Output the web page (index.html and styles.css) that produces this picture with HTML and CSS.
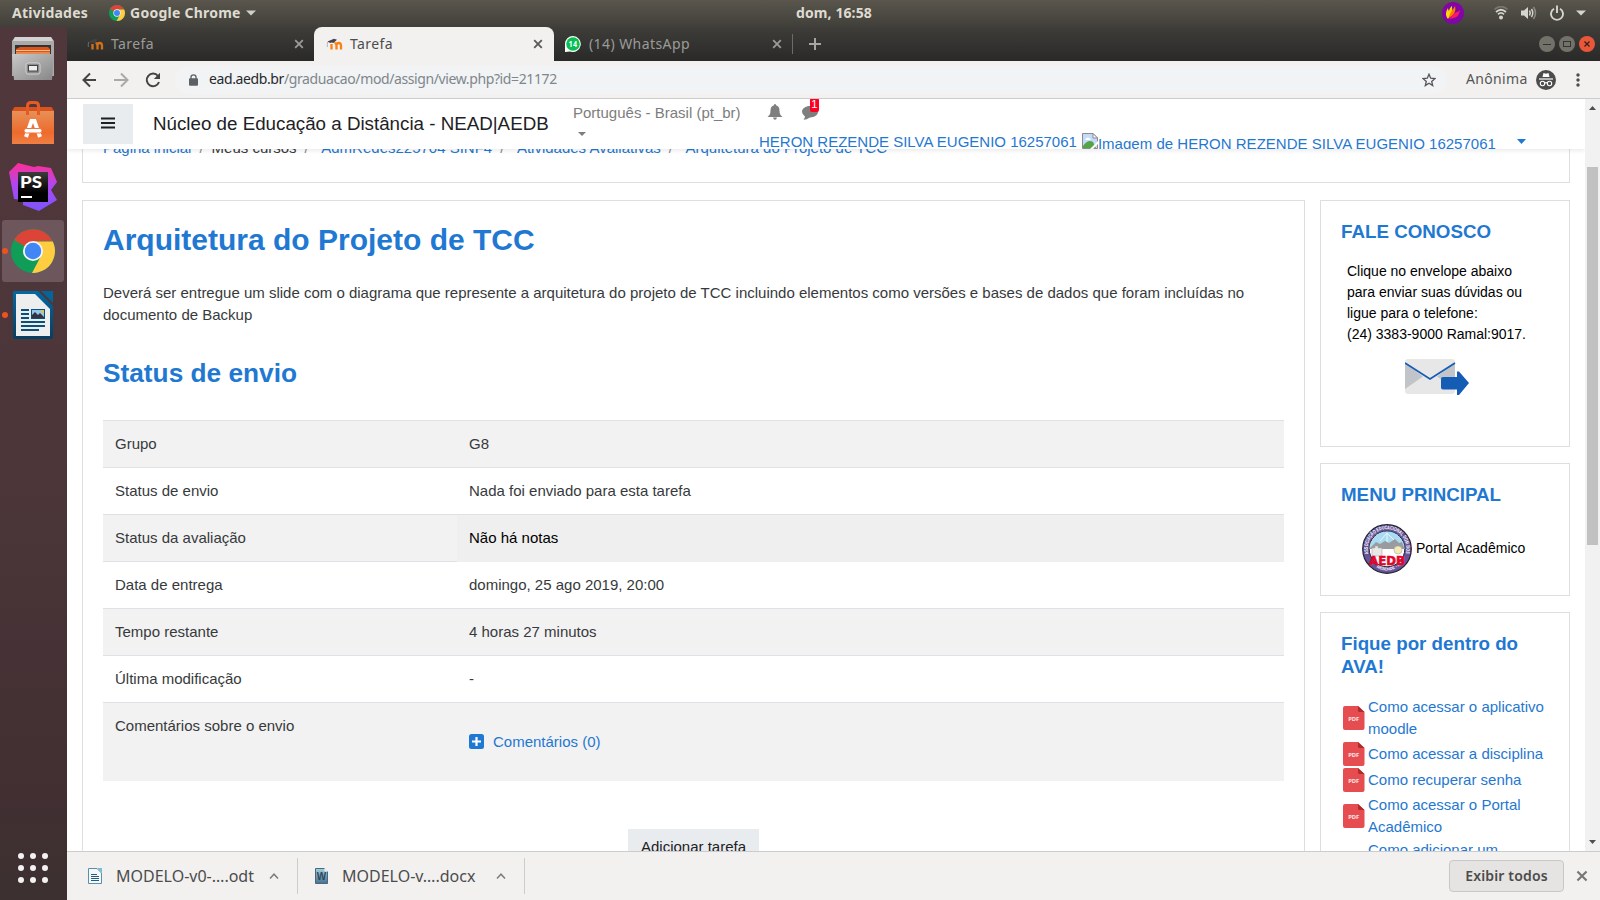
FILE: index.html
```html
<!DOCTYPE html>
<html lang="pt-br">
<head>
<meta charset="utf-8">
<title>Tarefa</title>
<link rel="stylesheet" href="styles.css">
</head>
<body>
<svg width="0" height="0" class="defs">
  <defs>
    <linearGradient id="steel" x1="0" y1="0" x2="1" y2="1"><stop offset="0" stop-color="#c9c9c9"/><stop offset="1" stop-color="#868686"/></linearGradient>
    <linearGradient id="bag" x1="0" y1="0" x2="0" y2="1"><stop offset="0" stop-color="#e79058"/><stop offset=".65" stop-color="#ee6a2c"/><stop offset="1" stop-color="#f08044"/></linearGradient>
    <linearGradient id="pink" x1="0" y1="0" x2="0" y2="1"><stop offset="0" stop-color="#ff2e93"/><stop offset=".45" stop-color="#b146f0"/><stop offset="1" stop-color="#7a55fb"/></linearGradient>
    <linearGradient id="blk" x1="0" y1="0" x2="0" y2="1"><stop offset="0" stop-color="#3c3c3c"/><stop offset=".7" stop-color="#000"/></linearGradient>
    <linearGradient id="blue" x1="0" y1="0" x2="0" y2="1"><stop offset="0" stop-color="#0369a3"/><stop offset="1" stop-color="#083d5f"/></linearGradient>
    <linearGradient id="word" x1="0" y1="0" x2="0" y2="1"><stop offset="0" stop-color="#a3cfdd"/><stop offset="1" stop-color="#48708f"/></linearGradient>
    <symbol id="chrome" viewBox="0 0 44 44">
      <circle cx="22" cy="22" r="22" fill="#0f9d58"/>
      <path d="M22 22 3 11A22 22 0 0 1 41.5 12L22 12.500Z" fill="#db4437"/>
      <path d="M22 12.500H41.800A22 22 0 0 1 21 44L30 27Z" fill="#ffcd40"/>
      <circle cx="22" cy="22" r="10" fill="#f4f4f4"/><circle cx="22" cy="22" r="8.200" fill="#4285f4"/>
    </symbol>
    <symbol id="moodle" viewBox="0 0 16 12">
      <path d="M5 11.500V6M10 11.500V7.500Q10 5.200 8 5.200M10 7.500Q10 5 12.200 5T14.500 7.500V11.500" fill="none" stroke="#f98012" stroke-width="2.300"/>
      <path d="M1 3.500 7.500.800l3 1-3.500 3.200Q5 4 3.500 5Z" fill="#454545"/><path d="M1.200 4Q.5 6 .8 9" fill="none" stroke="#999" stroke-width=".7"/>
    </symbol>
    <symbol id="x" viewBox="0 0 10 10"><path d="M1.200 1.200 8.800 8.800M8.800 1.200 1.200 8.800" stroke="currentColor" stroke-width="1.800"/></symbol>
    <symbol id="pdf" viewBox="0 0 22 24">
      <path d="M2 0H15L21.500 6V22a2 2 0 0 1-2 2H2a2 2 0 0 1-2-2V2a2 2 0 0 1 2-2Z" fill="#e64d50"/><path d="M15 0 21.500 6H16.500A1.500 1.500 0 0 1 15 4.500Z" fill="#b32a2d"/>
      <text x="5.200" y="15" font-family="Noto Sans,sans-serif" font-size="5.800" font-weight="700" fill="#fbe6e6" textLength="11">PDF</text>
    </symbol>
  </defs>
</svg>
<div class="desktop">
  <header class="panel">
    <span class="activities">Atividades</span>
    <svg class="panel-logo" width="16" height="16"><use href="#chrome"/></svg>
    <span class="appname">Google Chrome</span>
    <svg class="panel-caret" width="10" height="6"><path d="M0 .5H10L5 5.500Z" fill="#d0cfc9"/></svg>
    <span class="clock">dom, 16:58</span>
    <div class="tray">
      <svg width="22" height="22" viewBox="0 0 22 22"><circle cx="11" cy="11" r="11" fill="#8106a5"/><path d="M6 17C2 12 5 8 6 6c0 2 1 3 1 3 1-4 3-5 3-5 0 4 1 5-1 8Z" fill="#ffd60a"/><path d="M7 16C8 9 12 7 13 4c1 4 0 6-2 9Z" fill="#ff7a00"/><path d="M7 17c3-2 4-6 8-7 0 0 2-1 3-2-1 6-3 8-11 9Z" fill="#ff1767"/></svg>
      <svg class="wifi" width="14" height="14" viewBox="0 0 14 14" fill="none" stroke-width="1.700"><path d="M.500 3.500Q7-2.500 13.500 3.500" stroke="#77766e"/><path d="M2 6Q7 1.500 12 6M4 8.300Q7 5.500 10 8.300" stroke="#d5d4cf"/><circle cx="7" cy="11.500" r="2" fill="#d5d4cf"/></svg>
      <svg class="vol" width="16" height="14" viewBox="0 0 16 14"><path d="M0 4.500H3L7 1V13L3 9.500H0Z" fill="#d5d4cf"/><path d="M8.500 4.500Q10 7 8.500 9.500M10.500 3Q13 7 10.500 11" fill="none" stroke="#d5d4cf" stroke-width="1.500"/><path d="M12.500 1Q16.500 7 12.500 13" fill="none" stroke="#8a8981" stroke-width="1.500"/></svg>
      <svg class="power" width="14" height="16" viewBox="0 0 14 16"><path d="M4 3.700A6 6 0 1 0 10 3.700M7 .5V8" fill="none" stroke="#d5d4cf" stroke-width="1.900"/></svg>
      <svg class="sys-caret" width="10" height="6"><path d="M0 .5H10L5 5.500Z" fill="#d5d4cf"/></svg>
    </div>
  </header>
  <div class="below">
    <nav class="dock">
      <svg width="67" height="873" viewBox="0 27 67 873">
        <rect x="2" y="220" width="62" height="62" rx="3" fill="#6d565c"/>
        <path d="M15 37H51L54 41V76H12V41Z" fill="#aaa"/><path d="M15 37H51L53 41H13Z" fill="#d3d3d3"/><path d="M15 45H51V55H15Z" fill="#333"/><path d="M16 49 20 47H48L50 49V55H16Z" fill="#d9551c"/><path d="M16 50.500H50M16 53H50" stroke="#f6bd86" stroke-width="1.200"/>
        <path d="M12 54H54L52 80H14Z" fill="url(#steel)"/><rect x="26" y="63" width="14" height="11" rx="2" fill="#8b8b8b" stroke="#d6d6d6"/><rect x="28.500" y="65.500" width="9" height="5.500" fill="#eee" stroke="#444"/>
        <path d="M14 107H52L54 111H12Z" fill="#b13e12"/><path d="M12 111H54V144H12Z" fill="url(#bag)"/><path d="M12 111 15 107H51L54 111Z" fill="#d9531e"/><path d="M27.500 115V106Q27.500 102.500 31 102.500H35Q38.500 102.500 38.500 106V115" fill="none" stroke="#e65b24" stroke-width="3"/>
        <path d="M26 137 31.500 121H34.500L40 137" fill="none" stroke="#fff" stroke-width="4"/><rect x="24" y="128.500" width="18" height="4.500" rx="2.200" fill="#fff" stroke="#ed763c"/>
        <path d="M9 172 18 163 34 167 38 166 51 168 57 182 51 190 57 200 39 211 23 205 23 200 14 199Z" fill="url(#pink)"/><rect x="18" y="172" width="30" height="30" fill="url(#blk)"/><text x="20" y="188" font-family="Lato,sans-serif" font-size="17" font-weight="900" textLength="22" lengthAdjust="spacingAndGlyphs" fill="#fff">PS</text><path d="M21 197H32" stroke="#fff" stroke-width="2"/>
        <use href="#chrome" x="11" y="229" width="44" height="44"/>
        <path d="M13 293Q13 291 15 291H38L53 306V337Q53 339 51 339H15Q13 339 13 337Z" fill="url(#blue)"/><path d="M41 291H53V303Z" fill="#05649a"/><path d="M16 294H35L50 309V336H16Z" fill="#eee"/><path d="M21 310H29M21 314H29M21 318H29M21 322H45M21 326H45M21 330H39" stroke="#07517c" stroke-width="2"/><rect x="31.500" y="309.500" width="13" height="9" fill="#8fc9e8" stroke="#07517c"/><path d="M32 318V315L35 312 38 315 40 313 44 317V318Z" fill="#334"/><circle cx="42.500" cy="311.500" r="1.500" fill="#f2c037"/>
        <circle cx="5" cy="251" r="3" fill="#e95420"/><circle cx="5" cy="315" r="3" fill="#e95420"/>
        <g fill="#f3f1f1"><circle cx="21" cy="856" r="3"/><circle cx="33" cy="856" r="3"/><circle cx="45" cy="856" r="3"/><circle cx="21" cy="868" r="3"/><circle cx="33" cy="868" r="3"/><circle cx="45" cy="868" r="3"/><circle cx="21" cy="880" r="3"/><circle cx="33" cy="880" r="3"/><circle cx="45" cy="880" r="3"/></g>
      </svg>
    </nav>
    <div class="browser">
      <div class="tabs">
        <div class="tab tab-first"><svg class="dim" width="17" height="12"><use href="#moodle"/></svg><span>Tarefa</span><svg class="close" width="10" height="10"><use href="#x"/></svg></div>
        <div class="tab active"><svg width="17" height="12"><use href="#moodle"/></svg><span>Tarefa</span><svg class="close" width="10" height="10"><use href="#x"/></svg></div>
        <div class="tab tab-wa"><svg width="16" height="16" viewBox="0 0 16 16"><path d="M8 0A8 8 0 1 1 5 15.500L0 16V8A8 8 0 0 1 8 0Z" fill="#fff"/><circle cx="8" cy="8" r="6.800" fill="#07bf52"/><text x="3.500" y="10.700" font-family="Noto Sans,sans-serif" font-size="8" font-weight="700" textLength="9" lengthAdjust="spacingAndGlyphs" fill="#fff">14</text></svg><span class="wa-title">(14) WhatsApp</span><svg class="close" width="10" height="10"><use href="#x"/></svg></div>
        <svg class="plus" width="12" height="12"><path d="M6 0V12M0 6H12" stroke="#a5a5a1" stroke-width="2"/></svg>
        <div class="winbtns">
          <svg width="56" height="16" viewBox="0 0 56 16"><circle cx="8" cy="8" r="8" fill="#73726a"/><path d="M4 8.500H12" stroke="#33332f"/><circle cx="28" cy="8" r="8" fill="#73726a"/><rect x="24.500" y="5.500" width="7" height="5" fill="none" stroke="#33332f"/><circle cx="48" cy="8" r="8" fill="#e9573a"/><path d="M45.500 5.500 50.500 10.500M50.500 5.500 45.500 10.500" stroke="#3a2019" stroke-width="1.300"/></svg>
        </div>
      </div>
      <div class="toolbar">
        <svg class="nav-icons" width="80" height="16" viewBox="0 0 80 16" fill="none" stroke-width="2"><path d="M14 8H2M8 1.500 1.500 8 8 14.500" stroke="#444"/><path d="M32 8H45M39 1.500 45.500 8 39 14.500" stroke="#aaa9a8"/><path d="M76 4A6.300 6.300 0 1 0 77 10" stroke="#444"/><path d="M78 .8V7H71.800Z" fill="#444"/></svg>
        <div class="omnibox">
          <svg width="9" height="12" viewBox="0 0 9 12"><rect y="4.200" width="9" height="7.500" rx="1" fill="#5d6166"/><path d="M2 5V3Q2 .8 4.500.8T7 3V5" fill="none" stroke="#5d6166" stroke-width="1.300"/></svg>
          <span class="url"><b>ead.aedb.br</b>/graduacao/mod/assign/view.php?id=21172</span>
          <svg class="star" width="14" height="14" viewBox="0 0 14 14"><path d="M7 1.200 8.700 5.200 13 5.500 9.700 8.400 10.700 12.600 7 10.300 3.300 12.600 4.300 8.400 1 5.500 5.300 5.200Z" fill="none" stroke="#54565a" stroke-width="1.300"/></svg>
        </div>
        <span class="anon">Anônima</span>
        <svg class="incog" width="20" height="20" viewBox="0 0 20 20"><circle cx="10" cy="10" r="10" fill="#4c4c4c"/><path d="M6.500 7 7.500 3 10 3.800 12.500 3 13.500 7Z" fill="#fff"/><path d="M3 9H17" stroke="#fff" stroke-width="1.200"/><g fill="none" stroke="#fff" stroke-width="1.100"><circle cx="6.500" cy="13.500" r="2.200"/><circle cx="13.500" cy="13.500" r="2.200"/><path d="M8.700 13Q10 12.300 11.300 13"/></g></svg>
        <svg class="dots" width="4" height="14" fill="#4c4c4c"><circle cx="2" cy="2" r="1.700"/><circle cx="2" cy="7" r="1.700"/><circle cx="2" cy="12" r="1.700"/></svg>
      </div>
      <div class="viewport">
        <div class="page">
          <div class="navbar">
            <div class="burger"><svg width="14" height="12"><path d="M0 1.500H14M0 6H14M0 10.500H14" stroke="#1d2125" stroke-width="2"/></svg></div>
            <div class="brand">Núcleo de Educação a Distância - NEAD|AEDB</div>
            <div class="lang">Português - Brasil (pt_br)<svg width="8" height="4"><path d="M0 0H8L4 4Z" fill="#7d7d7d"/></svg></div>
            <div class="user">
              <div class="notices">
                <svg width="16" height="16" viewBox="0 0 16 16" fill="#7f7f7f"><path d="M8 0Q9 0 9 1.200Q12.500 2 12.500 6.500Q12.500 11 15.500 13H.5Q3.500 11 3.500 6.500Q3.500 2 7 1.200Q7 0 8 0ZM6 13.500H10Q9.500 15.800 8 15.800T6 13.500Z"/></svg>
                <span class="chat"><svg width="16" height="14" viewBox="0 0 16 14"><path d="M8 0C12.500 0 16 2.500 16 5.800S12.500 11.500 8 11.500Q4.500 13.800 1.500 13.800Q3 12 3 10.500Q0 8.500 0 5.800C0 2.500 3.500 0 8 0Z" fill="#7f7f7f"/></svg><i class="badge">1</i></span>
              </div>
              <div class="userline"><span>HERON REZENDE SILVA EUGENIO 16257061</span><span class="avatar"><svg width="16" height="16" viewBox="0 0 16 16"><path d="M.5.5H11L15.500 5V15.500H.5Z" fill="#c5dafb" stroke="#8b8b8b"/><path d="M11 .5V5H15.500Z" fill="#fff" stroke="#8b8b8b"/><path d="M1 15V13Q6 6 11 9L14 15Z" fill="#54a344"/><path d="M3.500 6Q5 3.500 7 5Q9 5 8.500 7H3.500Z" fill="#fff"/><path d="M16 8 8 16H11L16 11Z" fill="#fff"/></svg>Imagem de HERON REZENDE SILVA EUGENIO 16257061</span><svg class="user-caret" width="9" height="5"><path d="M0 0H9L4.500 5Z" fill="#1f78d1"/></svg></div>
            </div>
          </div>
          <div class="crumbs"><a>Página inicial</a><i>/</i><span>Meus cursos</span><i class="wide">/</i><a>AdmRedes225704 SINF4</a><i class="wide">/</i><a>Atividades Avaliativas</a><i class="wide">/</i><a>Arquitetura do Projeto de TCC</a></div>
          <div class="columns">
            <main class="card main">
              <h2>Arquitetura do Projeto de TCC</h2>
              <p>Deverá ser entregue um slide com o diagrama que represente a arquitetura do projeto de TCC incluindo elementos como versões e bases de dados que foram incluídas no documento de Backup</p>
              <h3>Status de envio</h3>
              <div class="table">
                <div class="row"><div>Grupo</div><div>G8</div></div>
                <div class="row"><div>Status de envio</div><div>Nada foi enviado para esta tarefa</div></div>
                <div class="row"><div>Status da avaliação</div><div class="nograde">Não há notas</div></div>
                <div class="row"><div>Data de entrega</div><div>domingo, 25 ago 2019, 20:00</div></div>
                <div class="row"><div>Tempo restante</div><div>4 horas 27 minutos</div></div>
                <div class="row"><div>Última modificação</div><div>-</div></div>
                <div class="row last"><div>Comentários sobre o envio</div><div class="comments"><svg width="15" height="15" viewBox="0 0 15 15"><rect width="15" height="15" rx="2.500" fill="#1f78d1"/><path d="M7.500 3V12M3 7.500H12" stroke="#fff" stroke-width="2.200"/></svg><a>Comentários (0)</a></div></div>
              </div>
              <div class="add">Adicionar tarefa</div>
            </main>
            <aside>
              <section class="card contact">
                <h5>FALE CONOSCO</h5>
                <p>Clique no envelope abaixo<br>para enviar suas dúvidas ou<br>ligue para o telefone:<br>(24) 3383-9000 Ramal:9017.</p>
                <svg width="64" height="36" viewBox="0 0 64 36"><rect width="50" height="35" rx="3" fill="#e7e7e7"/><path d="M0 4 18 17.500 0 30ZM50 4 32 17.500 50 30Z" fill="#c1c5c9"/><path d="M0 4 25 20 50 4" fill="none" stroke="#155cb5" stroke-width="1.700"/><path d="M38 18H52V12.500L54 12.500 64 24 54 36H52V30.500H38Q36 30.500 36 28.500V20Q36 18 38 18Z" fill="#155cb5"/></svg>
              </section>
              <section class="card menu">
                <h5>MENU PRINCIPAL</h5>
                <div class="portal"><svg width="50" height="50" viewBox="0 0 50 50"><defs><path id="arc" d="M6.500 30A19.300 19.300 0 1 1 43.500 30"/><path id="arc2" d="M9 39Q25 54 41 39"/></defs><circle cx="25" cy="25" r="24.300" fill="#65549a" stroke="#25222f" stroke-width="1.200"/><circle cx="25" cy="25" r="17.800" fill="#fff" stroke="#25222f"/><path d="M7.500 25A17.500 17.500 0 0 1 42.500 25Z" fill="#a9dbf2"/><path d="M25 9V20M25 9 18 17M25 9 33 17" stroke="#e8f7fd"/><path d="M8 24 14 18 18 20 23 17 27 19 33 15 37 19 40 18 42.500 25H8Z" fill="#9a9b9e"/><path d="M10 28V24H13V22H16V24H20V32H10Z" fill="#e8e8e8" stroke="#aaa" stroke-width=".6"/><circle cx="36" cy="26" r="4" fill="#f3ebb6" stroke="#aaa" stroke-width=".6"/><text font-family="Liberation Sans,sans-serif" font-size="5.200" font-weight="700" fill="#fff"><textPath href="#arc" textLength="76" lengthAdjust="spacingAndGlyphs">ASSOCIAÇÃO EDUCACIONAL DOM BOSCO</textPath></text><text font-family="Liberation Sans,sans-serif" font-size="4" font-weight="700" fill="#fff"><textPath href="#arc2" startOffset="7">RESENDE - RJ</textPath></text><text x="7" y="41" font-family="DejaVu Sans,sans-serif" font-size="12.500" font-weight="700" fill="#e2062c" stroke="#e2062c" stroke-width=".6" textLength="36" lengthAdjust="spacingAndGlyphs">AEDB</text></svg><span>Portal Acadêmico</span></div>
              </section>
              <section class="card tips">
                <h5>Fique por dentro do AVA!</h5>
                <div class="tip two"><svg width="22" height="24"><use href="#pdf"/></svg><a>Como acessar o aplicativo<br>moodle</a></div>
                <div class="tip"><svg width="22" height="24"><use href="#pdf"/></svg><a>Como acessar a disciplina</a></div>
                <div class="tip"><svg width="22" height="24"><use href="#pdf"/></svg><a>Como recuperar senha</a></div>
                <div class="tip two"><svg width="22" height="24"><use href="#pdf"/></svg><a>Como acessar o Portal<br>Acadêmico</a></div>
                <div class="tip two cut"><svg width="22" height="24"><use href="#pdf"/></svg><a>Como adicionar um</a></div>
              </section>
            </aside>
          </div>
        </div>
        <div class="scroll"><svg width="7" height="4"><path d="M0 4H7L3.500 0Z" fill="#4f4f4f"/></svg><div class="thumb"></div><svg class="down" width="7" height="4"><path d="M0 0H7L3.500 4Z" fill="#4f4f4f"/></svg></div>
      </div>
      <footer class="shelf">
        <div class="dl dl1"><svg width="14" height="16" viewBox="0 0 14 16"><path d="M.5.5H9L13.500 5V15.500H.5Z" fill="#f5f8fa" stroke="#5b90ad"/><path d="M9 0H14V5Z" fill="#7dbdd0"/><path d="M3 6.500H9M3 8.500H11M3 10.500H11M3 12.500H11" stroke="#245a7d"/></svg><span>MODELO-v0-….odt</span><svg class="up" width="10" height="6"><path d="M1 5.500 5 1.200 9 5.500" fill="none" stroke="#7d7d7d" stroke-width="1.500"/></svg></div>
        <div class="dl dl2"><svg width="13" height="16" viewBox="0 0 13 16"><path d="M.5.5H9.500L12.500 3.500V15.500H.5Z" fill="url(#word)" stroke="#48697d"/><path d="M9.500 0 13 3.500H9.500Z" fill="#f2f2f2"/><text x="1.800" y="11.800" font-family="Liberation Sans,sans-serif" font-size="10" font-weight="700" fill="#30495a">W</text></svg><span>MODELO-v….docx</span><svg class="up" width="10" height="6"><path d="M1 5.500 5 1.200 9 5.500" fill="none" stroke="#7d7d7d" stroke-width="1.500"/></svg></div>
        <div class="showall">Exibir todos</div>
        <svg class="shelf-x" width="12" height="12"><use href="#x"/></svg>
      </footer>
    </div>
  </div>
</div>
</body>
</html>
```
FILE: styles.css
```css
* { box-sizing: border-box; }
body { margin: 0; width: 1600px; height: 900px; overflow: hidden; font-family: "Liberation Sans", Arial, sans-serif; font-size: 15px; line-height: 22.5px; color: #373a3c; }
svg { display: block; flex: none; }
.defs { position: absolute; }
i { font-style: normal; }
a { color: #1f78d1; }
.desktop { display: flex; flex-direction: column; height: 900px; }

.panel { position: relative; height: 27px; flex: none; display: flex; align-items: center; padding-bottom: 1px; background: linear-gradient(#5a564d, #403f39); color: #dfdbd2; font: 700 14px/26px "Noto Sans", sans-serif; white-space: nowrap; }
.activities { margin-left: 12px; width: 97px; letter-spacing: .25px; }
.appname { margin-left: 5px; width: 116px; letter-spacing: .25px; }
.clock { position: absolute; left: 796px; top: 0; letter-spacing: .1px; }
.tray { display: flex; align-items: center; margin-left: auto; padding-right: 14px; }
.wifi { margin-left: 30px; }
.vol { margin-left: 13px; }
.power { margin-left: 13px; }
.sys-caret { margin-left: 12px; }

.below { display: flex; flex: 1; min-height: 0; }
.dock { width: 67px; flex: none; background: linear-gradient(#50373b, #4c363a 50%, #412f32 88%, #3c3030); }
.browser { display: flex; flex-direction: column; width: 1533px; }

.tabs { display: flex; align-items: center; height: 34px; flex: none; background: linear-gradient(#3e3d39, #292928); font: 14px/34px "Noto Sans", sans-serif; color: #9c9b98; }
.tab { display: flex; align-items: center; height: 34px; white-space: nowrap; letter-spacing: .42px; }
.tab span { margin-left: 7px; }
.tab .close { margin-left: auto; color: #9c9b98; }
.tab-first { width: 247px; padding: 0 10px 0 20px; }
.dim { opacity: .8; }
.active { width: 240px; padding: 0 11px 0 12px; background: #f2f1f0; border-radius: 8px 8px 0 0; color: #4d4d4d; }
.active .close { color: #5a5a5a; }
.tab-wa { width: 239px; height: 20px; padding: 0 10px 0 11px; border-right: 1px solid #6b6b68; }
.tab .wa-title { margin-left: 8px; }
.plus { margin-left: 16px; }
.winbtns { margin-left: auto; padding-right: 5px; }

.toolbar { display: flex; align-items: center; height: 38px; flex: none; padding-left: 15px; background: #f2f1f0; border-bottom: 1px solid #ccc; font: 14px/35px "Noto Sans", sans-serif; color: #555; }
.omnibox { display: flex; align-items: center; width: 1272px; height: 28px; margin-left: 13px; padding: 0 11px 0 14px; border-radius: 14px; background: #f1f3f4; }
.url { margin: -2px 0 0 11px; color: #80868b; white-space: nowrap; letter-spacing: -.39px; }
.url b { font-weight: 400; color: #27292c; }
.star { margin-left: auto; }
.anon { margin: -2px 0 0 19px; width: 62px; letter-spacing: .35px; }
.incog { margin-left: 8px; }
.dots { margin-left: 20px; }

.viewport { display: flex; height: 752px; flex: none; }
.page { position: relative; width: 1518px; overflow: hidden; background: #fff; }
.navbar { position: relative; z-index: 1; display: flex; height: 50px; overflow: visible; padding-left: 16px; background: #fff; box-shadow: 0 2px 4px rgba(0,0,0,.08); white-space: nowrap; }
.burger { display: flex; align-items: center; justify-content: center; width: 50px; height: 40px; margin-top: 5px; background: #e9ecef; }
.burger svg { margin-top: -2px; }
.brand { margin: 14px 0 0 20px; width: 396px; font-size: 18.75px; color: #1d2125; }
.lang { margin: 3px 0 0 24px; width: 186px; color: #7d7d7d; }
.lang svg { margin: 7px 0 0 5px; }
.user { flex: 1; height: 50px; overflow: hidden; color: #1f78d1; }
.notices { display: flex; height: 32px; padding: 5px 0 0 8px; }
.chat { position: relative; margin: 2px 0 0 19px; }
.badge { position: absolute; left: 8px; top: -8px; width: 9px; height: 14px; background: #ff0022; border-radius: 2px; color: #fff; font-size: 11.250px; line-height: 13px; text-align: center; }
.userline { display: flex; align-items: flex-start; }
.avatar { display: flex; margin: 2px 0 0 5px; letter-spacing: .02px; }
.user-caret { margin: 8px 0 0 21px; }

.crumbs { height: 40px; margin: -6px 15px 0; padding: 0 20px; border: solid #dedede; border-width: 0 1px 1px; white-space: nowrap; line-height: 10px; }
.crumbs i { margin: 0 8px; color: #868e96; }
.crumbs .wide { margin-right: 12.500px; }
.columns { display: flex; gap: 15px; padding: 17px 15px 0; align-items: flex-start; }
.card { border: 1px solid #dedede; background: #fff; }
.main { width: 1223px; height: 760px; padding: 20px; }
h2, h3, h5 { margin: 0; color: #1f78d1; font-weight: 700; }
h2 { font-size: 30px; line-height: 36px; padding-top: 1px; }
.main p { margin: 24px 0 0; height: 67px; line-height: 22px; }
h3 { font-size: 26.25px; line-height: 32px; padding-top: 8px; height: 71px; }
.row { display: grid; grid-template-columns: 354px 1fr; height: 47px; border-top: 1px solid #dee2e6; }
.row > div { padding: 12px; }
.row:nth-child(odd) { background: #f2f2f2; }
.row .nograde { background: #efefef; color: #000; }
.last { height: 79px; }
.row > .comments { display: flex; gap: 9px; padding-top: 28px; }
.comments svg { margin-top: 3px; }
.add { width: 131px; height: 37px; margin: 48px 0 0 525px; padding-top: 7px; text-align: center; background: #e9ecef; color: #1d2125; }
aside { width: 250px; }
aside .card { padding: 19px 20px 20px; margin-bottom: 16px; }
h5 { font-size: 18.75px; line-height: 23px; }
.contact { height: 247px; }
.contact p { margin: 18px 0 14px 6px; font-size: 14px; line-height: 21px; color: #000; white-space: nowrap; }
.contact svg { margin-left: 64px; }
.menu { height: 133px; }
.portal { display: flex; align-items: center; gap: 4px; margin: 18px 0 0 21px; font-size: 14px; color: #000; white-space: nowrap; letter-spacing: .03px; }
.portal span { margin-top: -2px; }
.tips { height: 300px; }
.tips h5 { margin-bottom: 17px; }
.tip { display: flex; align-items: center; gap: 3px; height: 26px; padding-left: 2px; white-space: nowrap; }
.two { height: 46px; }
.cut { align-items: flex-start; }
.cut svg { margin-top: 12px; }
.scroll { width: 15px; background: #f1f1f1; display: flex; flex-direction: column; align-items: center; padding: 7px 0; }
.thumb { width: 11px; height: 378px; margin-top: 57px; background: #c1c1c1; }
.down { margin-top: auto; }

.shelf { display: flex; align-items: center; height: 49px; border-top: 1px solid #ccc; background: #f2f1f0; color: #4c4c4c; font: 16px/36px "Noto Sans", sans-serif; white-space: nowrap; }
.dl { display: flex; align-items: center; height: 36px; border-right: 1px solid #ccc; }
.dl1 { width: 231px; padding: 0 18px 0 21px; }
.dl2 { width: 227px; padding: 0 18px 0 17px; }
.dl span { margin-left: 14px; }
.up { margin-left: auto; }
.showall { margin-left: auto; width: 115px; height: 32px; border: 1px solid #c8c8c8; border-radius: 4px; background: #e5e4e2; font-size: 14px; line-height: 29px; font-weight: 600; letter-spacing: .15px; text-align: center; }
.shelf-x { margin: 0 12px; color: #777; }
```
